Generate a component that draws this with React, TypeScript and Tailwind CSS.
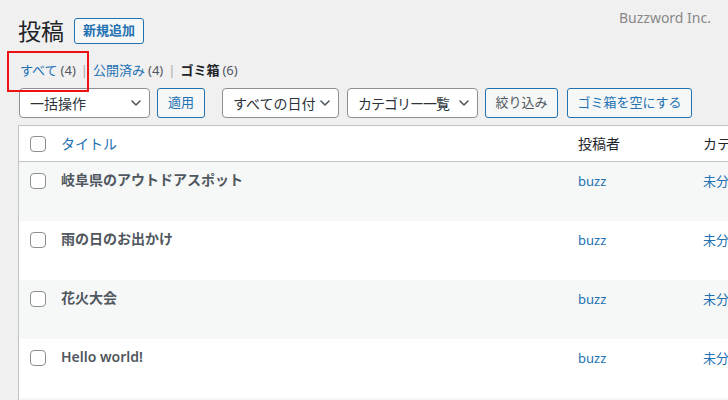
import React from 'react';

const posts = ['岐阜県のアウトドアスポット', '雨の日のお出かけ', '花火大会', 'Hello world!', ''];

function Chevron() {
  return (
    <svg width="10" height="6" viewBox="0 0 10 6" className="shrink-0">
      <polyline points="1,1 5,5 9,1" fill="none" stroke="#50575e" strokeWidth="1.6" strokeLinecap="round" strokeLinejoin="round" />
    </svg>
  );
}

function Select({ label, width, tight }: { label: string; width: string; tight?: boolean }) {
  return (
    <div className={`flex h-[30px] items-center justify-between rounded border border-[#8c8f94] bg-white pl-[10px] pr-[8px] text-[14px] text-[#2c3338] ${width}`}>
      <span className={tight ? 'tracking-[-1px]' : ''}>{label}</span>
      <Chevron />
    </div>
  );
}

function Button({ label, width, gray }: { label: string; width: string; gray?: boolean }) {
  return (
    <div
      className={`flex h-[30px] items-center justify-center rounded-[3px] border border-[#2271b1] bg-[#f6f7f7] text-[13px] ${gray ? 'text-[#50575e]' : 'text-[#2271b1]'} ${width}`}
    >
      {label}
    </div>
  );
}

function Checkbox() {
  return <div className="h-4 w-4 shrink-0 rounded border border-[#8c8f94] bg-white" />;
}

export default function App() {
  return (
    <div
      className="relative h-[400px] w-[728px] overflow-hidden bg-[#f0f0f1] pl-[18px] pt-[17px]"
      style={{ fontFamily: '"Noto Sans", "Noto Sans CJK JP", sans-serif' }}
    >
      <div className="absolute right-[17px] top-[8px] text-[14px] leading-5 text-[#888]">Buzzword Inc.</div>
      <div className="absolute left-[7px] top-[51px] h-[41px] w-[82px] border-2 border-[#ee1111]" />

      <div className="flex h-[28px] items-center gap-[10px]">
        <h1 className="text-[23px] leading-7 text-[#1d2327]">投稿</h1>
        <div className="flex h-[26px] items-center rounded-[3px] border border-[#2271b1] bg-[#f6f7f7] px-[8px] text-[13px] font-bold text-[#2271b1]">
          新規追加
        </div>
      </div>

      <div className="mt-[16px] flex h-[18px] items-center pl-[2px] text-[13px] leading-[18px]">
        <span className="text-[#2271b1]">すべて</span>
        <span className="ml-[3px] text-[#50575e]">(4)</span>
        <span className="mx-[5px] text-[#a7aaad]">|</span>
        <span className="text-[#2271b1]">公開済み</span>
        <span className="ml-[3px] text-[#50575e]">(4)</span>
        <span className="mx-[5px] text-[#a7aaad]">|</span>
        <span className="font-bold text-[#1d2327]">ゴミ箱</span>
        <span className="ml-[3px] text-[#50575e]">(6)</span>
      </div>

      <div className="mt-[9px] flex items-center pl-px">
        <Select label="一括操作" width="w-[131px]" />
        <div className="ml-[7px]">
          <Button label="適用" width="w-[48px]" />
        </div>
        <div className="ml-[17px]">
          <Select label="すべての日付" width="w-[117px]" />
        </div>
        <div className="ml-[8px]">
          <Select label="カテゴリー一覧" width="w-[131px]" tight />
        </div>
        <div className="ml-[7px]">
          <Button label="絞り込み" width="w-[73px]" gray />
        </div>
        <div className="ml-[9px]">
          <Button label="ゴミ箱を空にする" width="w-[125px]" />
        </div>
      </div>

      <div className="mt-[7px] w-[800px] border-l border-t border-[#c3c4c7] bg-white">
        <div className="flex h-[36px] items-center border-b border-[#c3c4c7] text-[14px]">
          <div className="w-[42px] pl-[11px]">
            <Checkbox />
          </div>
          <div className="w-[517px] text-[#2271b1]">タイトル</div>
          <div className="w-[125px] text-[#1d2327]">投稿者</div>
          <div className="text-[#1d2327]">カテゴリー</div>
        </div>
        {posts.map((title, i) => (
          <div key={i} className={`flex h-[59px] items-start ${i % 2 === 0 ? 'bg-[#f6f7f7]' : 'bg-white'}`}>
            <div className="w-[42px] pl-[11px] pt-[11px]">{title && <Checkbox />}</div>
            <div className="w-[517px] pt-[8px] text-[14px] font-semibold leading-5 text-[#50575e]">{title}</div>
            <div className="w-[125px] pt-[9px] text-[13px] leading-5 text-[#2271b1]">{title && 'buzz'}</div>
            <div className="pt-[9px] text-[13px] leading-5 text-[#2271b1]">{title && '未分類'}</div>
          </div>
        ))}
      </div>
    </div>
  );
}
